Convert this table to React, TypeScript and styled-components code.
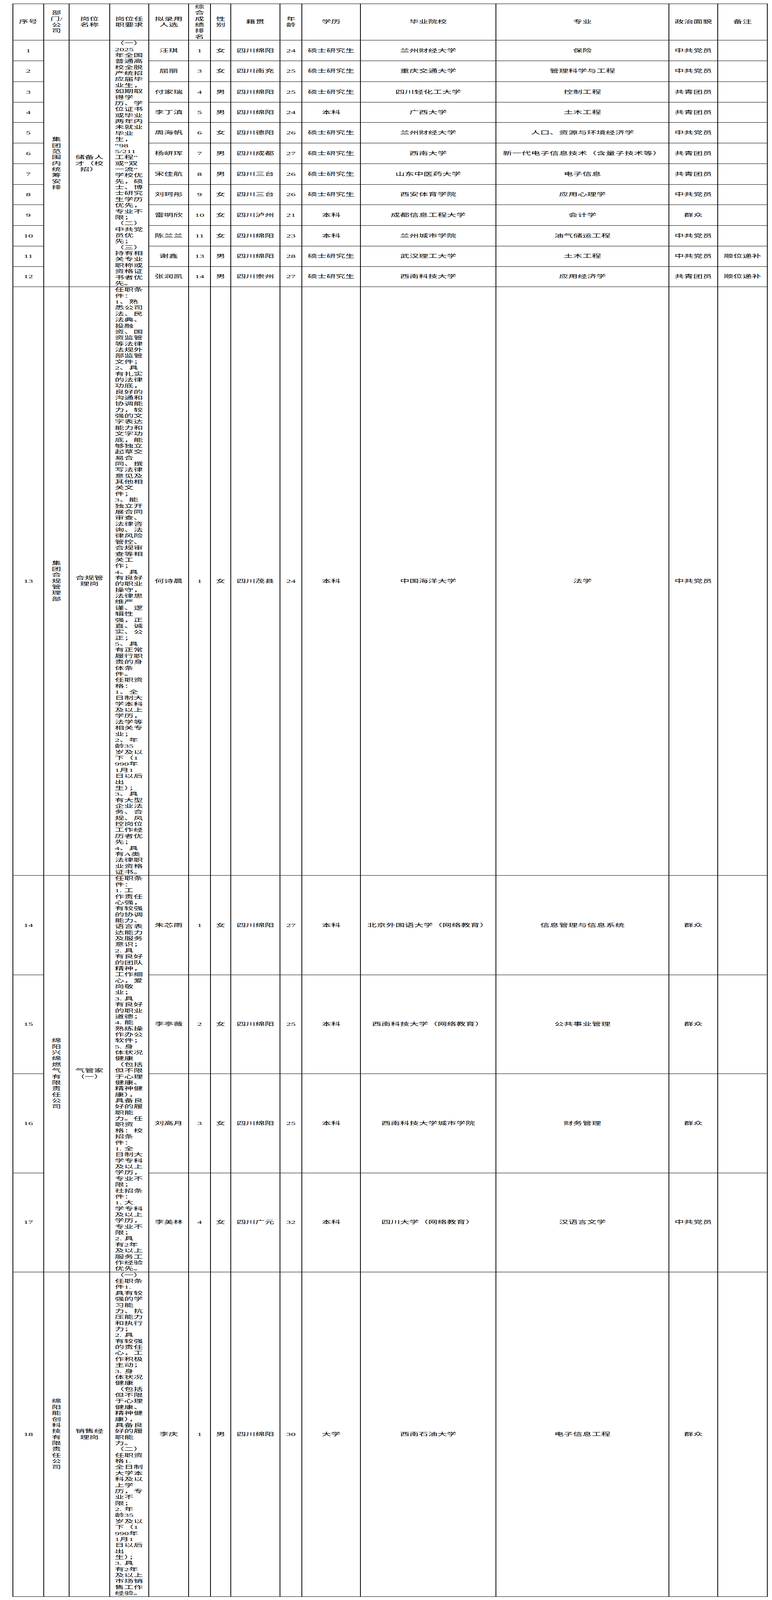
import React, { useLayoutEffect, useState } from "react";
import styled, { createGlobalStyle } from "styled-components";

const GlobalStyle = createGlobalStyle`
  html, body {
    margin: 0;
    padding: 0;
    background: #ffffff;
  }
  body {
    font-family: "Liberation Serif", "Noto Sans CJK SC", serif;
    color: #000000;
  }
`;

// the sheet is drawn for a 7996px tall page
const SHEET_HEIGHT = 7996;

type Person = {
  no: number;
  name: string;
  rank: number;
  sex: string;
  origin: string;
  age: number;
  edu: string;
  school: string;
  major: string;
  politics: string;
  note?: string;
  h: number;
};

type Group = {
  dept: string[];
  post: string[];
  req: string[];
  people: Person[];
};

// column widths measured off the reference
const widths = [79, 65, 104, 100, 102, 56, 52, 126, 56, 150, 347, 443, 125, 127];

const headers: string[][] = [
  ["序号"],
  ["部", "门/", "公", "司"],
  ["岗位", "名称"],
  ["岗位任", "职要求"],
  ["拟录用", "人选"],
  ["综", "合", "成", "绩", "排", "名"],
  ["性", "别"],
  ["籍贯"],
  ["年", "龄"],
  ["学历"],
  ["毕业院校"],
  ["专业"],
  ["政治面貌"],
  ["备注"],
];

const chars = (s: string) => s.split("");

const groups: Group[] = [
  {
    dept: chars("集团范围内统筹安排"),
    post: ["储备人", "才（校", "招）"],
    req: [
      "（一）", "2025", "年全国", "普通高", "校全脱", "产统招", "应届毕", "业生，",
      "如期取", "得学", "历、学", "位证书", "或毕业", "两年内", "未就业", "毕业",
      "生，", "“98", "5/211", "工程”", "或“双", "一流”", "学校优", "先，硕",
      "士、博", "士研究", "生学历", "优先，", "专业不", "限；", "（二）", "中共党",
      "员优", "先；", "（三）", "持有相", "关专业", "职称或", "资格证", "书者优", "先。",
    ],
    people: [
      { no: 1, name: "汪琪", rank: 1, sex: "女", origin: "四川绵阳", age: 24, edu: "硕士研究生", school: "兰州财经大学", major: "保险", politics: "中共党员", h: 103 },
      { no: 2, name: "屈丽", rank: 3, sex: "女", origin: "四川南充", age: 25, edu: "硕士研究生", school: "重庆交通大学", major: "管理科学与工程", politics: "中共党员", h: 104 },
      { no: 3, name: "付家瑞", rank: 4, sex: "男", origin: "四川绵阳", age: 25, edu: "硕士研究生", school: "四川轻化工大学", major: "控制工程", politics: "共青团员", h: 103 },
      { no: 4, name: "李丁滇", rank: 5, sex: "男", origin: "四川绵阳", age: 24, edu: "本科", school: "广西大学", major: "土木工程", politics: "共青团员", h: 101 },
      { no: 5, name: "周海帆", rank: 6, sex: "女", origin: "四川德阳", age: 26, edu: "硕士研究生", school: "兰州财经大学", major: "人口、资源与环境经济学", politics: "中共党员", h: 103 },
      { no: 6, name: "杨岍珲", rank: 7, sex: "男", origin: "四川成都", age: 27, edu: "硕士研究生", school: "西南大学", major: "新一代电子信息技术（含量子技术等）", politics: "共青团员", h: 103 },
      { no: 7, name: "宋佳航", rank: 8, sex: "男", origin: "四川三台", age: 26, edu: "硕士研究生", school: "山东中医药大学", major: "电子信息", politics: "共青团员", h: 103 },
      { no: 8, name: "刘珂彤", rank: 9, sex: "女", origin: "四川三台", age: 26, edu: "硕士研究生", school: "西安体育学院", major: "应用心理学", politics: "中共党员", h: 101 },
      { no: 9, name: "雷明欣", rank: 10, sex: "女", origin: "四川泸州", age: 21, edu: "本科", school: "成都信息工程大学", major: "会计学", politics: "群众", h: 104 },
      { no: 10, name: "陈兰兰", rank: 11, sex: "女", origin: "四川绵阳", age: 23, edu: "本科", school: "兰州城市学院", major: "油气储运工程", politics: "中共党员", h: 103 },
      { no: 11, name: "谢鑫", rank: 13, sex: "男", origin: "四川绵阳", age: 28, edu: "硕士研究生", school: "武汉理工大学", major: "土木工程", politics: "中共党员", note: "顺位递补", h: 102 },
      { no: 12, name: "张润凯", rank: 14, sex: "男", origin: "四川崇州", age: 27, edu: "硕士研究生", school: "西南科技大学", major: "应用经济学", politics: "共青团员", note: "顺位递补", h: 101 },
    ],
  },
  {
    dept: chars("集团合规管理部"),
    post: ["合规管", "理岗"],
    req: [
      "任职条", "件：", "1、熟", "悉公司", "法、民", "法典、", "投融", "资、国",
      "资监管", "等法律", "法规外", "部监管", "文件；", "2、具", "有扎实", "的法律",
      "功底，", "良好的", "沟通和", "协调能", "力，较", "强的文", "字表达", "能力和",
      "文字功", "底，能", "够独立", "起草交", "易合", "同、撰", "写法律", "意见及",
      "其他相", "关文", "件；", "3、能", "独立开", "展合同", "审查、", "法律咨",
      "询、法", "律风险", "管控、", "合规审", "查等相", "关工", "作；", "4、具",
      "有良好", "的职业", "操守，", "法律思", "维严", "谨、逻", "辑性", "强，正",
      "直、诚", "实、公", "正；", "5、具", "有正常", "履行职", "责的身", "体条",
      "件。", "任职资", "格：", "1、全", "日制大", "学本科", "及以上", "学历，",
      "法学等", "相关专", "业；", "2、年", "龄35", "岁及以", "下（1", "990年",
      "1月1", "日以后", "出", "生）；", "3、具", "有大型", "企业法", "务、合",
      "规、风", "控岗位", "工作经", "历者优", "先；", "4、具", "有A类", "法律职",
      "业资格", "证书。",
    ],
    people: [
      { no: 13, name: "何诗晨", rank: 1, sex: "女", origin: "四川茂县", age: 24, edu: "本科", school: "中国海洋大学", major: "法学", politics: "中共党员", h: 2941 },
    ],
  },
  {
    dept: chars("绵阳兴绵燃气有限责任公司"),
    post: ["气管家", "（一）"],
    req: [
      "任职条", "件：", "1. 工", "作责任", "心强，", "有较强", "的协调", "能力、",
      "语言表", "达能力", "及服务", "意识；", "2. 具", "有良好", "的团队", "精神，",
      "工作细", "心，爱", "岗敬", "业；", "3. 具", "有良好", "的职业", "道德；",
      "4. 能", "熟练操", "作办公", "软件；", "5. 身", "体状况", "健康", "（包括",
      "但不限", "于心理", "健康、", "精神健", "康），", "具备良", "好的履", "职能",
      "力。任", "职资", "格：校", "招条", "件：", "1. 全", "日制大", "学专科",
      "及以上", "学历，", "专业不", "限；", "社招条", "件：", "1. 大", "学专科",
      "及以上", "学历，", "专业不", "限；", "2. 具", "有2年", "及以上", "服务工",
      "作经验", "优先。",
    ],
    people: [
      { no: 14, name: "朱芯雨", rank: 1, sex: "女", origin: "四川绵阳", age: 27, edu: "本科", school: "北京外国语大学（网络教育）", major: "信息管理与信息系统", politics: "群众", h: 497 },
      { no: 15, name: "李亭薇", rank: 2, sex: "女", origin: "四川绵阳", age: 25, edu: "本科", school: "西南科技大学（网络教育）", major: "公共事业管理", politics: "群众", h: 494 },
      { no: 16, name: "刘高月", rank: 3, sex: "女", origin: "四川绵阳", age: 25, edu: "本科", school: "西南科技大学城市学院", major: "财务管理", politics: "群众", h: 495 },
      { no: 17, name: "李美林", rank: 4, sex: "女", origin: "四川广元", age: 32, edu: "本科", school: "四川大学（网络教育）", major: "汉语言文学", politics: "中共党员", h: 495 },
    ],
  },
  {
    dept: chars("绵阳能创科技有限责任公司"),
    post: ["销售经", "理岗"],
    req: [
      "（一）", "任职条", "件1.", "具有较", "强的学", "习能", "力、抗", "压能力",
      "和执行", "力；", "2. 具", "有较强", "的责任", "心，工", "作积极", "主动；",
      "3. 身", "体状况", "健康", "（包括", "但不限", "于心理", "健康、", "精神健",
      "康），", "具备良", "好的履", "职能", "力。", "（二）", "任职资", "格1.",
      "全日制", "大学本", "科及以", "上学", "历，专", "业不", "限；", "2. 年",
      "龄35", "岁及以", "下（1", "990年", "1月1", "日以后", "出", "生）；",
      "3. 具", "有2年", "及以上", "市场销", "售工作", "经验。",
    ],
    people: [
      { no: 18, name: "李庆", rank: 1, sex: "男", origin: "四川绵阳", age: 30, edu: "大学", school: "西南石油大学", major: "电子信息工程", politics: "群众", h: 1620 },
    ],
  },
];

const Viewport = styled.div`
  width: 100%;
  height: 100vh;
  overflow: hidden;
`;

const Page = styled.div`
  height: ${SHEET_HEIGHT}px;
  padding: 18px 0 0 32px;
  box-sizing: border-box;
  transform-origin: 0 0;
`;

const Table = styled.table`
  border-collapse: collapse;
  table-layout: fixed;
  width: 1933px;
  font-size: 24px;
  line-height: 30px;
`;

const HeadRow = styled.tr`
  height: 182px;
`;

const BodyRow = styled.tr<{ $h: number }>`
  height: ${(p) => p.$h}px;
`;

const HeadCell = styled.th`
  border: 2px solid #000;
  padding: 0 4px;
  font-weight: normal;
  text-align: center;
  vertical-align: middle;
  white-space: nowrap;
`;

const Cell = styled.td`
  border: 2px solid #000;
  padding: 0 4px;
  text-align: center;
  vertical-align: middle;
  white-space: nowrap;
`;

const ReqCell = styled(Cell)`
  text-align: left;
  padding: 0 4px 0 12px;
  vertical-align: top;
`;

const Lines = ({ lines }: { lines: string[] }) => (
  <>
    {lines.map((l, i) => (
      <React.Fragment key={i}>
        {i > 0 && <br />}
        {l}
      </React.Fragment>
    ))}
  </>
);

// squeeze the sheet vertically when the window is shorter than the sheet
const useFitScale = () => {
  const [scale, setScale] = useState(1);
  useLayoutEffect(() => {
    const update = () => setScale(Math.min(1, window.innerHeight / SHEET_HEIGHT));
    update();
    window.addEventListener("resize", update);
    return () => window.removeEventListener("resize", update);
  }, []);
  return scale;
};

const App = () => {
  const scale = useFitScale();
  return (
    <Viewport>
      <GlobalStyle />
      <Page style={scale < 1 ? { transform: `scaleY(${scale})` } : undefined}>
        <Table>
          <colgroup>
            {widths.map((w, i) => (
              <col key={i} style={{ width: w }} />
            ))}
          </colgroup>
          <thead>
            <HeadRow>
              {headers.map((h, i) => (
                <HeadCell key={i}>
                  <Lines lines={h} />
                </HeadCell>
              ))}
            </HeadRow>
          </thead>
          <tbody>
            {groups.map((g) =>
              g.people.map((p, i) => (
                <BodyRow key={p.no} $h={p.h}>
                  <Cell>{p.no}</Cell>
                  {i === 0 && (
                    <>
                      <Cell rowSpan={g.people.length}>
                        <Lines lines={g.dept} />
                      </Cell>
                      <Cell rowSpan={g.people.length}>
                        <Lines lines={g.post} />
                      </Cell>
                      <ReqCell rowSpan={g.people.length}>
                        <Lines lines={g.req} />
                      </ReqCell>
                    </>
                  )}
                  <Cell>{p.name}</Cell>
                  <Cell>{p.rank}</Cell>
                  <Cell>{p.sex}</Cell>
                  <Cell>{p.origin}</Cell>
                  <Cell>{p.age}</Cell>
                  <Cell>{p.edu}</Cell>
                  <Cell>{p.school}</Cell>
                  <Cell>{p.major}</Cell>
                  <Cell>{p.politics}</Cell>
                  <Cell>{p.note ?? ""}</Cell>
                </BodyRow>
              ))
            )}
          </tbody>
        </Table>
      </Page>
    </Viewport>
  );
};

export default App;
